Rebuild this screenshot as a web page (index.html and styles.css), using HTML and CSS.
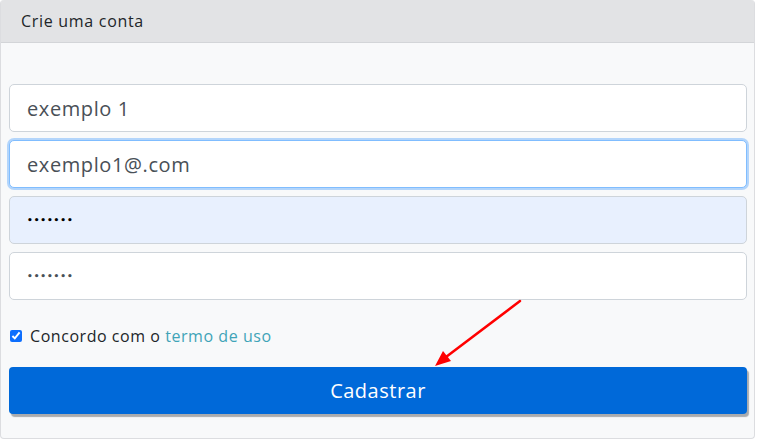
FILE: index.html
```html
<!DOCTYPE html>
<html lang="pt">
<head>
<meta charset="utf-8">
<title>Crie uma conta</title>
<link rel="stylesheet" href="styles.css">
</head>
<body>
<div class="card">
  <div class="card-header">Crie uma conta</div>
  <div class="card-body">
    <form class="form">
      <input class="field" type="text" value="exemplo 1">
      <input class="field focused" type="text" value="exemplo1@.com">
      <div class="field pass autofill"><span class="dots dark">•••••••</span></div>
      <div class="field pass"><span class="dots">•••••••</span></div>
      <label class="check-row"><input type="checkbox" checked class="check"> Concordo com o&nbsp;<a class="link" href="#">termo de uso</a></label>
      <button type="button" class="btn">Cadastrar</button>
    </form>
  </div>
</div>
<svg class="arrow" width="759" height="443" viewBox="0 0 759 443">
  <line x1="520" y1="301" x2="446" y2="357" stroke="#ff0000" stroke-width="2.5" stroke-linecap="round"/>
  <polygon points="435,366 443,351 451,361" fill="#ff0000"/>
</svg>
</body>
</html>
```
FILE: styles.css
```css
html, body {
  margin: 0;
  padding: 0;
  background: #ffffff;
}
body {
  font-family: "Open Sans", "Liberation Sans", sans-serif;
  color: #212529;
  width: 759px;
  height: 443px;
  position: relative;
  overflow: hidden;
}
.card {
  width: 753px;
  border: 1px solid #dcdde0;
  border-top: none;
  border-radius: 4px;
  background: #f8f9fa;
}
.card-header {
  height: 42px;
  background: #e2e3e5;
  border-bottom: 1px solid #d3d5d8;
  display: flex;
  align-items: center;
  padding: 0 20px;
  font-size: 16px;
  letter-spacing: 0.7px;
  border-radius: 3px 3px 0 0;
}
.card-body {
  padding: 41px 7px 24px 8px;
}
.form {
  display: flex;
  flex-direction: column;
  gap: 8px;
}
.field {
  box-sizing: border-box;
  height: 48px;
  width: 100%;
  border: 1px solid #ced4da;
  border-radius: 5px;
  background: #fff;
  padding: 0 17px;
  font-family: inherit;
  font-size: 20px;
  letter-spacing: 0.6px;
  color: #495057;
  outline: none;
  margin: 0;
}
.focused {
  border-color: #80bdff;
  box-shadow: 0 0 0 2px rgba(0, 123, 255, 0.28);
}
.pass {
  display: flex;
  align-items: center;
}
.autofill {
  background: #e8f0fe;
}
.dots {
  font-family: "DejaVu Sans", sans-serif;
  font-size: 9px;
  font-weight: bold;
  letter-spacing: 0.9px;
  color: #495057;
}
.dots.dark {
  color: #000;
}
.check-row {
  display: flex;
  align-items: center;
  margin-top: 17px;
  padding-left: 1px;
  font-size: 16px;
  line-height: 22px;
  letter-spacing: 0.55px;
  color: #212529;
}
.check {
  width: 12px;
  height: 12px;
  margin: 0 8px 0 0;
  accent-color: #0d6efd;
}
.link {
  color: #3fa4b8;
  text-decoration: none;
}
.btn {
  margin-top: 12px;
  height: 47px;
  width: 100%;
  border: none;
  border-radius: 4px;
  background: #0069d9;
  color: #fff;
  font-family: inherit;
  font-size: 20px;
  letter-spacing: 0.5px;
  box-shadow: 2px 3px 1px #a9abae;
}
.arrow {
  position: absolute;
  left: 0;
  top: 0;
  pointer-events: none;
}
```
